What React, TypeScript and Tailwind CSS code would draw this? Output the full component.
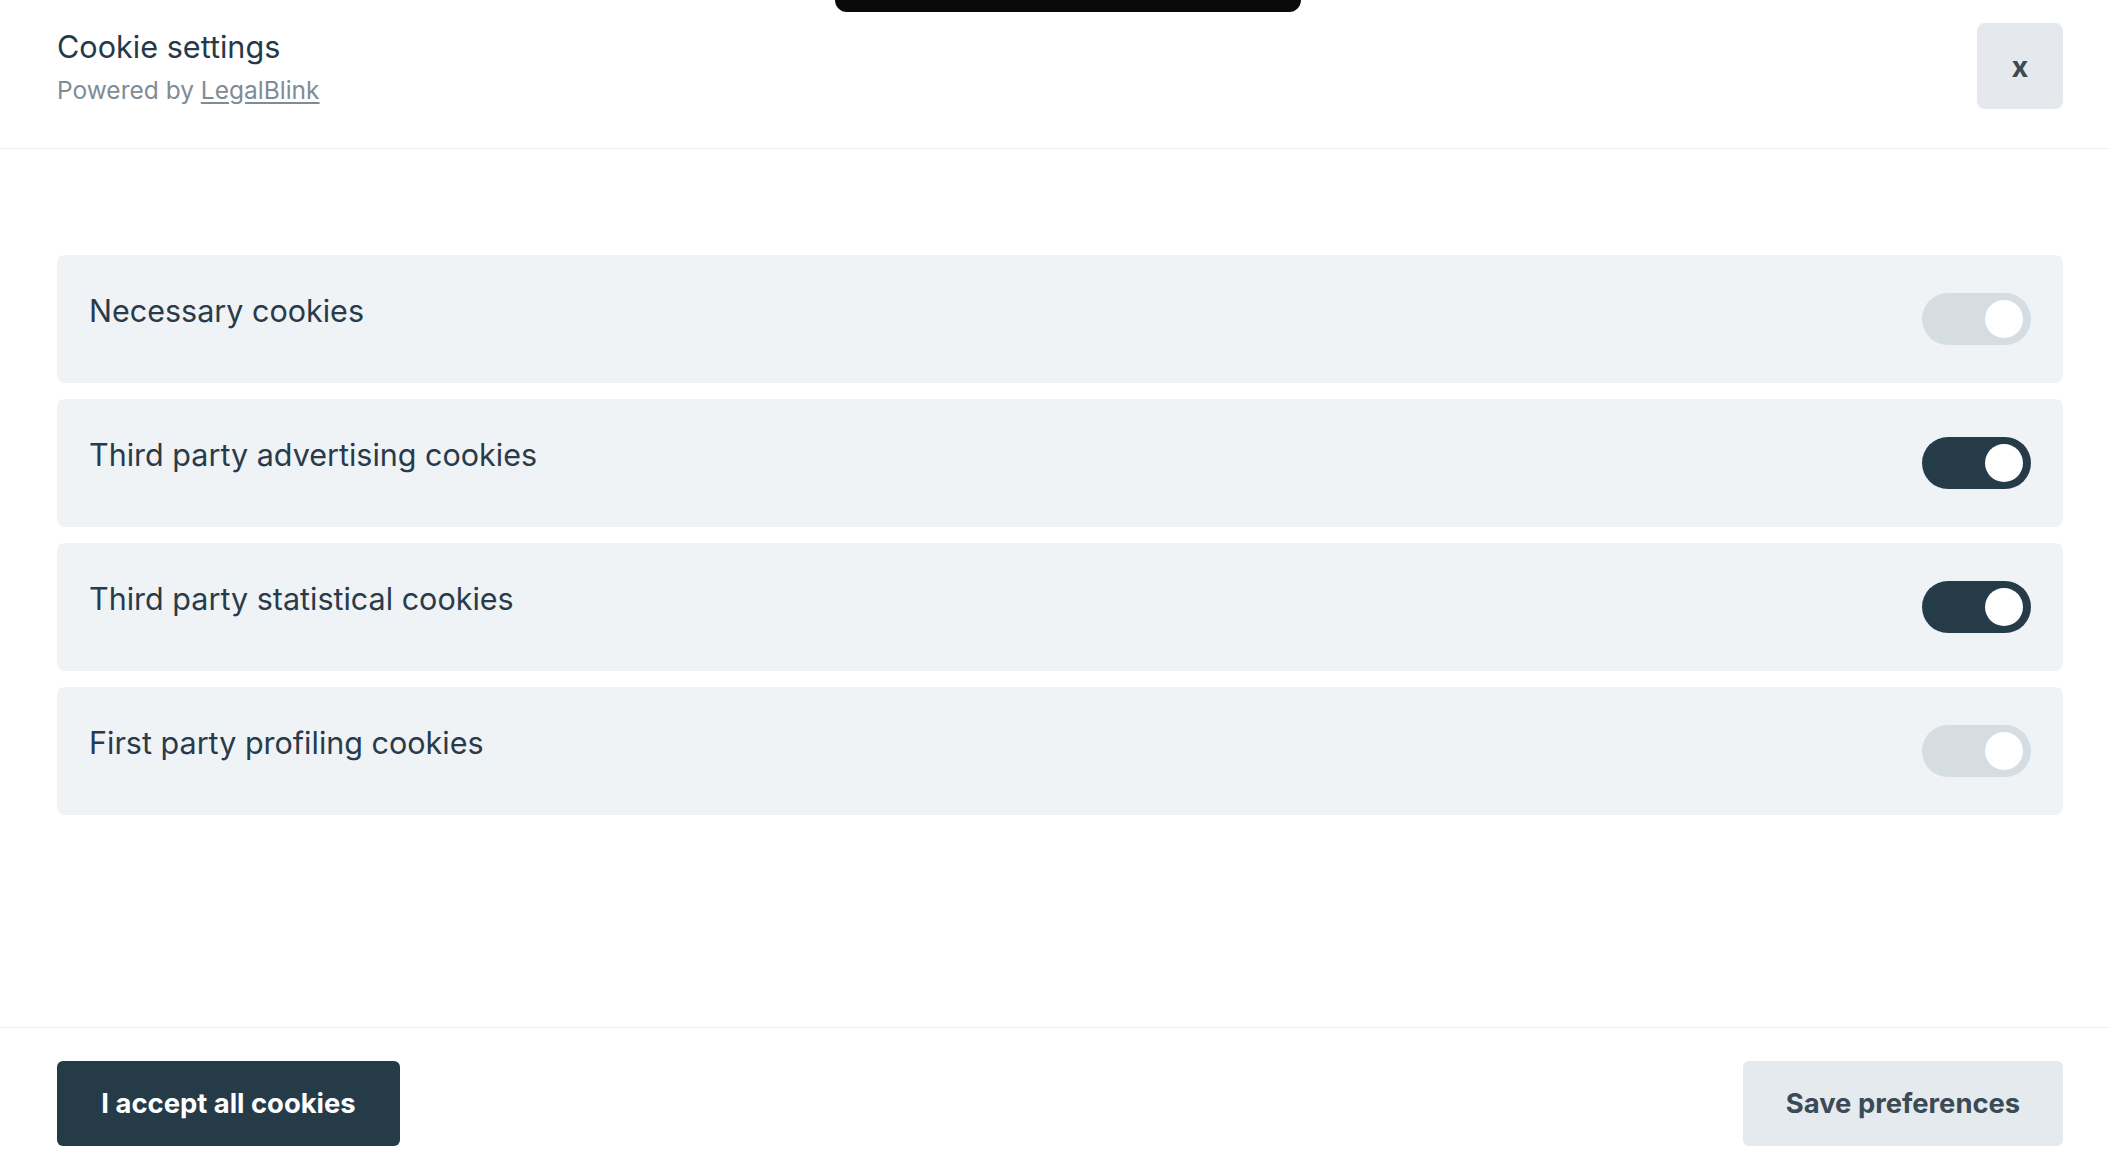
const categories = [
  { label: "Necessary cookies", on: false },
  { label: "Third party advertising cookies", on: true },
  { label: "Third party statistical cookies", on: true },
  { label: "First party profiling cookies", on: false },
];

function Toggle({ on }: { on: boolean }) {
  return (
    <div
      className={
        "flex h-[52px] w-[109px] shrink-0 items-center justify-end rounded-full pr-[8px] " +
        (on ? "bg-[#253b48]" : "bg-[#d5dde3]")
      }
    >
      <div className="h-[38px] w-[38px] rounded-full bg-white" />
    </div>
  );
}

export default function App() {
  return (
    <div
      className="relative flex h-[1166px] w-[2110px] flex-col overflow-hidden bg-white text-[#26394a]"
      style={{ fontFamily: "Inter, 'Noto Sans', sans-serif" }}
    >
      <div className="absolute left-[835px] top-0 h-[12px] w-[466px] rounded-b-[40px] bg-[#0a0a0a]" />

      <header className="flex h-[149px] shrink-0 items-start justify-between border-b border-[#efefef] pl-[57px] pr-[47px]">
        <div className="pt-[29px]">
          <h1 className="text-[30.6px] leading-[36px] font-normal">Cookie settings</h1>
          <p className="mt-[10px] text-[24.5px] leading-[30px] text-[#7f8c96]">
            Powered by{" "}
            <a href="#" className="underline underline-offset-[3px]">
              LegalBlink
            </a>
          </p>
        </div>
        <button className="mt-[23px] flex h-[86px] w-[86px] items-center justify-center rounded-lg bg-[#e5e9ed] pt-[2px] text-[29px] font-bold text-[#3b4a55]">
          x
        </button>
      </header>

      <main className="flex flex-1 flex-col gap-4 pl-[57px] pr-[47px] pt-[106px]">
        {categories.map((c) => (
          <div
            key={c.label}
            className="flex h-[128px] items-start justify-between rounded-lg bg-[#eff3f6] pl-[32px] pr-[32px] pt-[38px]"
          >
            <span className="text-[30.5px] leading-[36px] text-[#293b4b]">{c.label}</span>
            <Toggle on={c.on} />
          </div>
        ))}
      </main>

      <footer className="flex h-[139px] shrink-0 items-start justify-between border-t border-[#efefef] pl-[57px] pr-[47px] pt-[33px]">
        <button className="h-[85px] w-[343px] rounded-md bg-[#253b48] text-[27.4px] font-bold text-white">
          I accept all cookies
        </button>
        <button className="h-[85px] w-[320px] rounded-md bg-[#e5eaee] text-[27.4px] font-bold text-[#3b4a55]">
          Save preferences
        </button>
      </footer>
    </div>
  );
}
